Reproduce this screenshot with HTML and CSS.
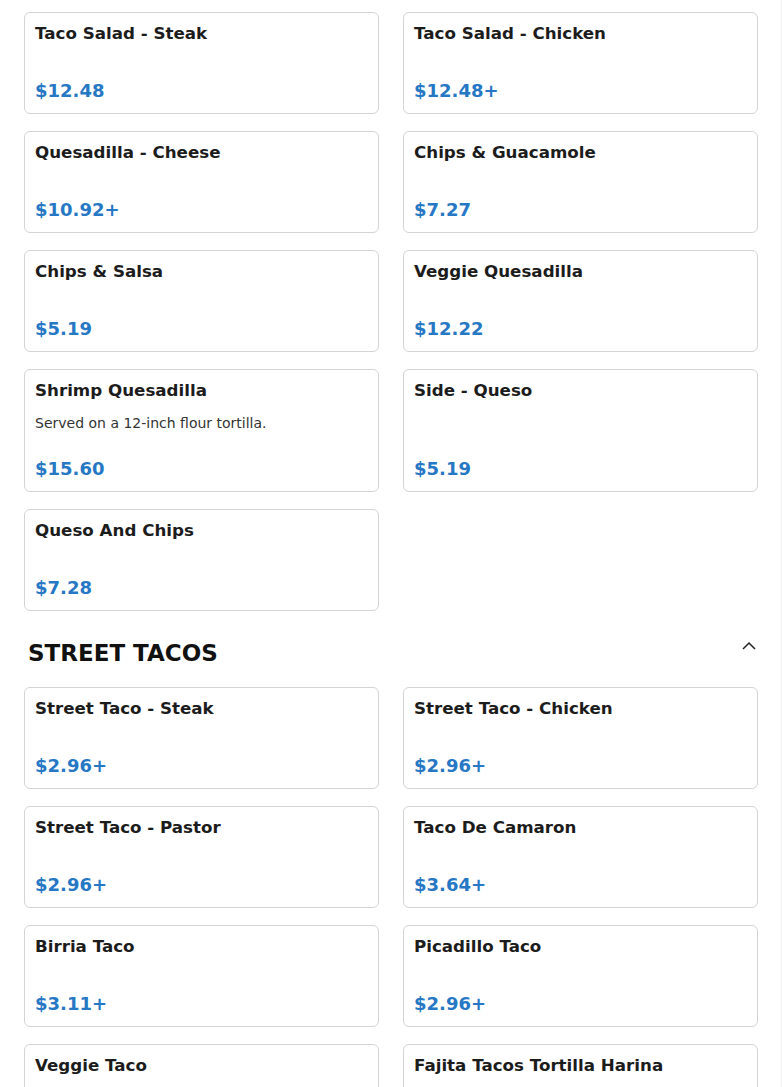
FILE: index.html
```html
<!DOCTYPE HTML>
<html lang="en">
  <head>
  <title>Menu</title>
  <meta charset="utf-8">
  <link rel="stylesheet" href="styles.css">
  </head>

  <body>

  <div id="menu">

    <div class="grid">
      <div class="item">
        <div class="itemName">Taco Salad - Steak</div>
        <div class="itemPrice">$12.48</div>
      </div>
      <div class="item">
        <div class="itemName">Taco Salad - Chicken</div>
        <div class="itemPrice">$12.48+</div>
      </div>
      <div class="item">
        <div class="itemName">Quesadilla - Cheese</div>
        <div class="itemPrice">$10.92+</div>
      </div>
      <div class="item">
        <div class="itemName">Chips &amp; Guacamole</div>
        <div class="itemPrice">$7.27</div>
      </div>
      <div class="item">
        <div class="itemName">Chips &amp; Salsa</div>
        <div class="itemPrice">$5.19</div>
      </div>
      <div class="item">
        <div class="itemName">Veggie Quesadilla</div>
        <div class="itemPrice">$12.22</div>
      </div>
      <div class="item">
        <div class="itemName">Shrimp Quesadilla</div>
        <div class="itemDesc">Served on a 12-inch flour tortilla.</div>
        <div class="itemPrice">$15.60</div>
      </div>
      <div class="item">
        <div class="itemName">Side - Queso</div>
        <div class="itemPrice">$5.19</div>
      </div>
      <div class="item">
        <div class="itemName">Queso And Chips</div>
        <div class="itemPrice">$7.28</div>
      </div>
    </div>

    <div class="section">
      <h2 class="sectionTitle">STREET TACOS</h2>
      <svg class="chevron" width="14" height="10" viewBox="0 0 14 10">
        <path d="M1 8 L7 2 L13 8" fill="none" stroke="#222" stroke-width="1.5"/>
      </svg>
    </div>

    <div class="grid">
      <div class="item">
        <div class="itemName">Street Taco - Steak</div>
        <div class="itemPrice">$2.96+</div>
      </div>
      <div class="item">
        <div class="itemName">Street Taco - Chicken</div>
        <div class="itemPrice">$2.96+</div>
      </div>
      <div class="item">
        <div class="itemName">Street Taco - Pastor</div>
        <div class="itemPrice">$2.96+</div>
      </div>
      <div class="item">
        <div class="itemName">Taco De Camaron</div>
        <div class="itemPrice">$3.64+</div>
      </div>
      <div class="item">
        <div class="itemName">Birria Taco</div>
        <div class="itemPrice">$3.11+</div>
      </div>
      <div class="item">
        <div class="itemName">Picadillo Taco</div>
        <div class="itemPrice">$2.96+</div>
      </div>
      <div class="item">
        <div class="itemName">Veggie Taco</div>
        <div class="itemPrice">$2.96+</div>
      </div>
      <div class="item">
        <div class="itemName">Fajita Tacos Tortilla Harina</div>
        <div class="itemPrice">$2.96+</div>
      </div>
    </div>

  </div>

  </body>

</html>
```

FILE: styles.css
```css
html {
  height: 100%;
}
body {
  margin: 0;
  padding: 0;
  background: #ffffff;
  color: #1c1c1c;
  font-family: "DejaVu Sans", sans-serif;
  font-size: 14px;
}

#menu {
  width: 734px;
  padding: 12px 23px 0 24px;
  border-right: 1px solid #f0f0f0;
  overflow: hidden;
}

.grid {
  display: grid;
  grid-template-columns: 355px 355px;
  column-gap: 24px;
  row-gap: 17px;
}

.item {
  display: flex;
  flex-direction: column;
  min-height: 102px;
  box-sizing: border-box;
  border: 1px solid #d4d4d4;
  border-radius: 6px;
  padding: 9px 10px 11px 10px;
}

.itemName {
  font-size: 16.7px;
  font-weight: bold;
  line-height: 22px;
}

.itemDesc {
  font-size: 14px;
  color: #333;
  line-height: 20px;
  margin: 12px 0 25px 0;
}

.itemPrice {
  margin-top: auto;
  font-size: 18px;
  font-weight: bold;
  line-height: 22px;
  color: #2677c4;
}

.section {
  display: flex;
  align-items: flex-start;
  justify-content: space-between;
  margin: 28px 0 20px 0;
  padding: 0 2px 0 4px;
}

.sectionTitle {
  margin: 0;
  font-size: 23px;
  line-height: 28px;
  font-weight: bold;
  color: #111;
}

.chevron {
  display: block;
  margin-top: 2px;
}
```
